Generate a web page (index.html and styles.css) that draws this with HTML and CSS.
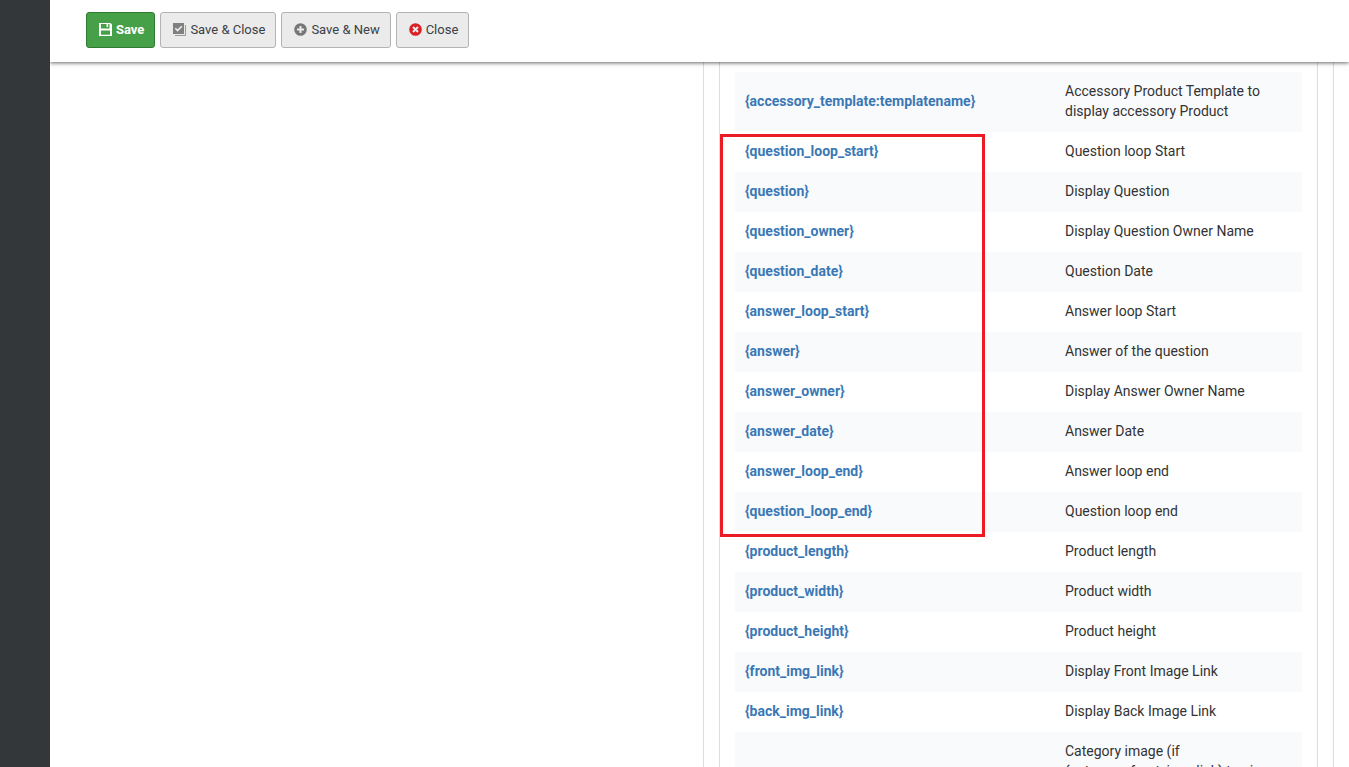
FILE: index.html
```html
<!DOCTYPE html>
<html lang="en">
<head>
<meta charset="utf-8">
<title>Template tags</title>
<link rel="stylesheet" href="styles.css">
</head>
<body>
<div class="app">
  <aside class="sidebar"></aside>
  <div class="page">
    <header class="toolbar">
      <button type="button" class="btn btn-save">
        <svg class="icon" viewBox="0 0 13 13"><path fill="currentColor" fill-rule="evenodd" d="M0 0H11.5L13 1.5V13H0ZM2 1V5.5H10.5V1ZM7.5 1V4H9.2V1ZM2 7.5V11.8H11V7.5Z"/></svg>Save</button>
      <button type="button" class="btn">
        <svg class="icon" viewBox="0 0 13 13"><path fill="#808080" d="M0 0H11V11H0Z"/><path fill="none" stroke="#999" d="M2 12.5H12.5V2"/><path fill="none" stroke="#eee" stroke-width="1.6" d="M2.3 5.3L4.6 7.6L8.8 3.2"/></svg>Save &amp; Close</button>
      <button type="button" class="btn">
        <svg class="icon" viewBox="0 0 13 13"><circle cx="6.5" cy="6.5" r="6.3" fill="#777"/><path stroke="#ebebeb" stroke-width="2" d="M6.5 3V10M3 6.5H10"/></svg>Save &amp; New</button>
      <button type="button" class="btn">
        <svg class="icon" viewBox="0 0 13 13"><circle cx="6.5" cy="6.5" r="6.3" fill="#da1f26"/><path stroke="#ebebeb" stroke-width="2" d="M4 4L9 9M9 4L4 9"/></svg>Close</button>
    </header>
    <main class="content">
      <section class="editor"></section>
      <section class="panel">
        <div class="panel-body">
          <table class="tags">
            <tbody>
              <tr><th scope="row">{accessory_template:templatename}</th><td>Accessory Product Template to display accessory Product</td></tr>
              <tr><th scope="row">{question_loop_start}</th><td>Question loop Start</td></tr>
              <tr><th scope="row">{question}</th><td>Display Question</td></tr>
              <tr><th scope="row">{question_owner}</th><td>Display Question Owner Name</td></tr>
              <tr><th scope="row">{question_date}</th><td>Question Date</td></tr>
              <tr><th scope="row">{answer_loop_start}</th><td>Answer loop Start</td></tr>
              <tr><th scope="row">{answer}</th><td>Answer of the question</td></tr>
              <tr><th scope="row">{answer_owner}</th><td>Display Answer Owner Name</td></tr>
              <tr><th scope="row">{answer_date}</th><td>Answer Date</td></tr>
              <tr><th scope="row">{answer_loop_end}</th><td>Answer loop end</td></tr>
              <tr><th scope="row">{question_loop_end}</th><td>Question loop end</td></tr>
              <tr><th scope="row">{product_length}</th><td>Product length</td></tr>
              <tr><th scope="row">{product_width}</th><td>Product width</td></tr>
              <tr><th scope="row">{product_height}</th><td>Product height</td></tr>
              <tr><th scope="row">{front_img_link}</th><td>Display Front Image Link</td></tr>
              <tr><th scope="row">{back_img_link}</th><td>Display Back Image Link</td></tr>
              <tr><th scope="row"></th><td>Category image (if<br>{category_front_img_link} tag is</td></tr>
            </tbody>
          </table>
          <div class="highlight"></div>
        </div>
      </section>
    </main>
  </div>
</div>
</body>
</html>
```

FILE: styles.css
```css
* {
  box-sizing: border-box;
}

body {
  margin: 0;
  background: #fff;
  color: #333;
  font: 14px/20px Roboto, "Liberation Sans", sans-serif;
}

.app {
  display: flex;
  height: 100vh;
  overflow: hidden;
}

.sidebar {
  flex: 0 0 50px;
  background: #33373a;
}

.page {
  flex: 1;
  min-width: 0;
  display: flex;
  flex-direction: column;
}

.toolbar {
  z-index: 1;
  display: flex;
  gap: 5px;
  padding: 12px 36px 14px;
  background: #fff;
  box-shadow: 0 1px 4px rgba(0, 0, 0, 0.6);
  clip-path: inset(0 0 -8px 0);
}

.btn {
  display: flex;
  align-items: center;
  gap: 4px;
  height: 36px;
  padding: 0 10px 1px 12px;
  border: 1px solid #b3b3b3;
  border-radius: 3px;
  background: #ebebeb;
  color: #3a4045;
  font: 13px/20px Roboto, "Liberation Sans", sans-serif;
}

.btn-save {
  border-color: #2f7a31;
  background: #46a047;
  color: #fff;
  font-weight: 700;
}

.icon {
  width: 13px;
  height: 13px;
}

.content {
  flex: 1;
  min-height: 0;
  display: grid;
  grid-template-columns: 653fr 631fr;
  padding-right: 15px;
  overflow: hidden;
}

.panel {
  padding: 0 15px;
  border: solid #ddd;
  border-width: 0 1px;
}

.panel-body {
  position: relative;
  min-height: 100%;
  padding: 10px 15px;
  border: solid #ddd;
  border-width: 0 1px;
}

.tags {
  width: 100%;
  table-layout: fixed;
  border-collapse: collapse;
}

.tags th,
.tags td {
  padding: 9px 10px 11px;
  text-align: left;
}

.tags th {
  width: 320px;
  color: #3a78b5;
  font-weight: 700;
}

.tags tr:nth-child(odd) {
  background: #f9fafc;
}

.highlight {
  position: absolute;
  top: 72px;
  left: 0;
  width: 265px;
  height: 403px;
  border: 3px solid #ed1c24;
}
```
